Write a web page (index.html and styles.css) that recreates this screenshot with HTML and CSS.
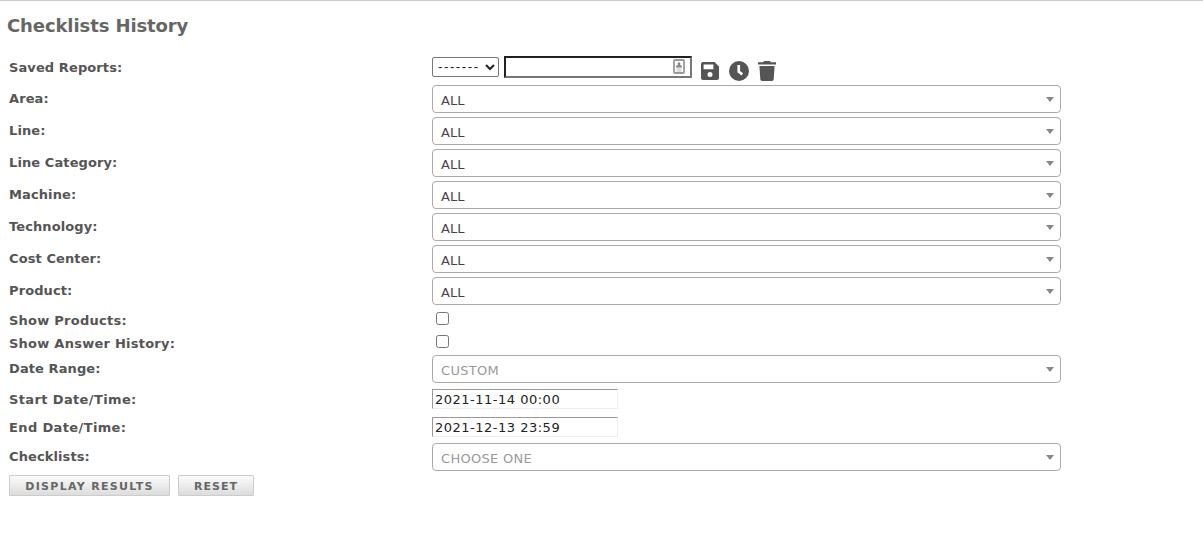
FILE: index.html
```html
<!DOCTYPE html>
<html>

<head>
	<meta charset="utf-8">
	<title>Checklists History</title>
	<link rel="stylesheet" href="styles.css">
</head>

<body>

	<h1>Checklists History</h1>

	<form id="reportForm" onsubmit="return false;">
		<div class="row saved">
			<label for="saved">Saved Reports:</label>
			<div class="field">
				<select id="saved"><option>-------</option></select>
				<div class="nameBox">
					<input type="text" id="reportName">
					<svg class="card" width="12" height="16" viewBox="0 0 12 16">
						<rect x="1" y="1" width="10" height="13" rx="1" fill="#fff" stroke="#999" stroke-width="1.8" />
						<path d="M6 3l1.4 1.3-.3 1.7 1.9 1V8.4H3V7l1.9-1-.3-1.7z" fill="#888" />
						<path d="M3.5 10h5M3.5 12h5" stroke="#bbb" />
					</svg>
				</div>
				<svg class="icon save" width="18" height="18" viewBox="0 0 18 18">
					<path fill-rule="evenodd" d="M2 0h11.5L18 4.5V16a2 2 0 0 1-2 2H2a2 2 0 0 1-2-2V2a2 2 0 0 1 2-2zM2.6 2.6v4.6h9.8V2.6zM9 10a2.5 2.5 0 1 0 0 5 2.5 2.5 0 0 0 0-5z" />
				</svg>
				<svg class="icon clock" width="20" height="20" viewBox="0 0 20 20">
					<path fill-rule="evenodd" d="M10 0a10 10 0 1 0 0 20 10 10 0 0 0 0-20zM8.4 4h2.7v5.9l3 2.4-1.6 2.2-4.1-3.2z" />
				</svg>
				<svg class="icon trash" width="18" height="20" viewBox="0 0 18 20">
					<path d="M0 1.3h5L6.2 0h5.6L13 1.3h5v2.2H0zM1.4 5h15.2l-.9 13.3a1.8 1.8 0 0 1-1.8 1.7H4.1a1.8 1.8 0 0 1-1.8-1.7z" />
				</svg>
			</div>
		</div>
		<div class="row"><label>Area:</label><div class="combo">ALL</div></div>
		<div class="row"><label>Line:</label><div class="combo">ALL</div></div>
		<div class="row"><label>Line Category:</label><div class="combo">ALL</div></div>
		<div class="row"><label>Machine:</label><div class="combo">ALL</div></div>
		<div class="row"><label>Technology:</label><div class="combo">ALL</div></div>
		<div class="row"><label>Cost Center:</label><div class="combo">ALL</div></div>
		<div class="row"><label>Product:</label><div class="combo">ALL</div></div>
		<div class="row check">
			<label for="showProducts">Show Products:</label>
			<input type="checkbox" id="showProducts">
		</div>
		<div class="row check">
			<label for="showHistory">Show Answer History:</label>
			<input type="checkbox" id="showHistory">
		</div>
		<div class="row"><label>Date Range:</label><div class="combo empty">CUSTOM</div></div>
		<div class="row date">
			<label for="start">Start Date/Time:</label>
			<input type="text" id="start" value="2021-11-14 00:00">
		</div>
		<div class="row date">
			<label for="end">End Date/Time:</label>
			<input type="text" id="end" value="2021-12-13 23:59">
		</div>
		<div class="row"><label>Checklists:</label><div class="combo empty">CHOOSE ONE</div></div>
		<div class="buttons">
			<button type="submit" class="display">DISPLAY RESULTS</button>
			<button type="reset" class="reset">RESET</button>
		</div>
	</form>

</body>

</html>
```
FILE: styles.css
```css
* {
	box-sizing: border-box;
}
body {
	margin: 0;
	border-top: 1px solid #ccc;
	background: #fff;
	color: #555;
	font-family: Verdana, "DejaVu Sans", sans-serif;
	font-size: 13px;
}
h1 {
	height: 50px;
	margin: 0;
	padding: 14px 0 0 7px;
	color: #666;
	font-size: 18px;
	line-height: 22px;
	letter-spacing: -0.1px;
}
#reportForm {
	padding-left: 9px;
}
.row {
	display: grid;
	grid-template-columns: 423px 629px;
	align-items: center;
	height: 32px;
}
label {
	font-weight: bold;
	line-height: 16px;
	letter-spacing: 0.1px;
}
.saved label {
	padding-top: 2px;
}
.field {
	display: flex;
	align-items: center;
}
#saved {
	width: 67px;
	height: 20px;
	padding: 0 0 2px 1px;
	border: 1px solid #767676;
	border-radius: 2px;
	background: #fff;
	color: #222;
	font: 13.33px "Liberation Sans", Arial, sans-serif;
	letter-spacing: 1.5px;
}
.nameBox {
	position: relative;
	width: 188px;
	height: 22px;
	margin-left: 5px;
}
#reportName {
	display: block;
	width: 100%;
	height: 100%;
	border: 2px inset #767676;
	background: #fff;
}
.card {
	position: absolute;
	top: 3px;
	right: 7px;
}
.icon {
	fill: #555;
	margin-top: 7px;
}
.save {
	margin-left: 9px;
}
.clock {
	margin-left: 10px;
}
.trash {
	margin-left: 9px;
}
.combo {
	display: flex;
	align-items: center;
	justify-content: space-between;
	height: 28px;
	padding: 3px 6px 0 8px;
	border: 1px solid #aaa;
	border-radius: 4px;
	color: #444;
}
.combo::after {
	content: "";
	margin-top: -2px;
	border: solid transparent;
	border-width: 5px 4px 0;
	border-top-color: #888;
}
.empty {
	color: #999;
	letter-spacing: 0.3px;
}
.check {
	height: 23px;
}
.check label {
	padding-top: 5px;
	letter-spacing: 0.25px;
}
.check input {
	width: 13px;
	height: 13px;
	margin: 0 0 0 4px;
}
.date {
	height: 28px;
}
.date label {
	padding-top: 2px;
	letter-spacing: 0.37px;
}
.date input {
	width: 186px;
	height: 20px;
	padding: 0 2px;
	border: 1px solid;
	border-color: #999 #eee #eee #999;
	color: #222;
	font: 13px Verdana, "DejaVu Sans", sans-serif;
	letter-spacing: 0.5px;
}
.buttons {
	display: flex;
	gap: 8px;
	padding-top: 2px;
}
.buttons button {
	height: 21px;
	padding: 1px 0 0;
	border: 1px solid #ccc;
	border-radius: 1px;
	background: linear-gradient(#fafafa, #ddd);
	color: #666;
	font: bold 11px Verdana, "DejaVu Sans", sans-serif;
	letter-spacing: 1px;
}
.buttons .display {
	width: 161px;
	letter-spacing: 1.3px;
}
.reset {
	width: 76px;
}
```
